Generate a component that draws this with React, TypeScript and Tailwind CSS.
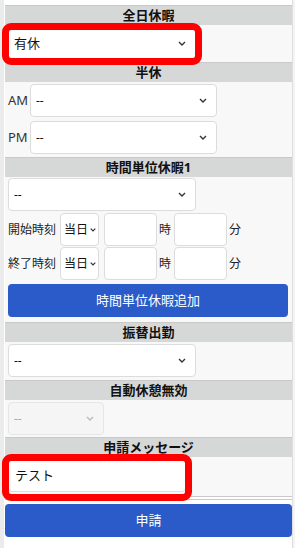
import React from "react";

const Chevron = ({ color = "#333" }: { color?: string }) => (
  <svg width="8" height="5" viewBox="0 0 8 5" className="shrink-0">
    <path d="M1 1l3 3 3-3" fill="none" stroke={color} strokeWidth="1.4" />
  </svg>
);

function Select({ value, cls, disabled }: { value: string; cls: string; disabled?: boolean }) {
  return (
    <div
      className={`h-[33px] flex items-center justify-between pl-[5px] pr-[9px] border rounded-[4px] ${
        disabled ? "bg-[#f5f5f5] border-[#e6e6e6] text-[#a8a8a8]" : "bg-white border-[#dcdcdc] text-[#111]"
      } ${cls}`}
    >
      <span>{value}</span>
      <Chevron color={disabled ? "#bbb" : "#333"} />
    </div>
  );
}

const Header = ({ children }: { children: React.ReactNode }) => (
  <div className="h-[20px] border-t border-[#c9c9c9] bg-[#d6d8d7] flex items-center justify-center font-bold text-[13px] text-[#111] leading-none">
    {children}
  </div>
);

const Red = ({ cls }: { cls: string }) => (
  <div className={`absolute border-[7px] border-[#ff0000] rounded-[9px] pointer-events-none ${cls}`} />
);

const TimeRow = ({ label }: { label: string }) => (
  <div className="flex items-center h-[33px]">
    <span className="w-[52px] text-[#222]">{label}</span>
    <div className="w-[39px] h-[33px] border border-[#dcdcdc] rounded-[4px] bg-white flex items-center pl-[3px] gap-[2px]">
      <span>当日</span>
      <svg width="6" height="4" viewBox="0 0 6 4"><path d="M0.7 0.7l2.3 2.3 2.3-2.3" fill="none" stroke="#333" strokeWidth="1.2" /></svg>
    </div>
    <div className="w-[53px] h-[33px] ml-[5px] border border-[#dcdcdc] rounded-[4px] bg-white" />
    <span className="ml-[2px] w-[15px] text-[#222]">時</span>
    <div className="w-[53px] h-[33px] border border-[#dcdcdc] rounded-[4px] bg-white" />
    <span className="ml-[2px] text-[#222]">分</span>
  </div>
);

export default function App() {
  return (
    <div
      className="w-[295px] h-[548px] bg-white flex overflow-hidden text-[12px] text-[#111]"
      style={{ fontFamily: '"Noto Sans", "Noto Sans CJK JP", sans-serif' }}
    >
      <div className="w-[4px] bg-[#ebebeb] shrink-0" />
      <div className="w-[1px] bg-white shrink-0" />
      <div className="w-[287px] shrink-0 flex flex-col pt-[5px]">
        <Header>全日休暇</Header>
        <div className="bg-[#f8f8f8] px-[3px] pt-[2px] pb-[2px] h-[37px]">
          <div className="relative w-[188px]">
            <Select value="有休" cls="w-[188px] text-[13px]" />
            <Red cls="-left-[6px] -right-[6px] -top-[4px] -bottom-[5px]" />
          </div>
        </div>
        <Header>半休</Header>
        <div className="bg-[#f8f8f8] px-[3px] pt-[2px] pb-[3px] flex flex-col gap-[4px]">
          <div className="flex items-center">
            <span className="w-[22px] text-[#333] text-[13px]">AM</span>
            <Select value="--" cls="w-[187px]" />
          </div>
          <div className="flex items-center">
            <span className="w-[22px] text-[#333] text-[13px]">PM</span>
            <Select value="--" cls="w-[187px]" />
          </div>
        </div>
        <Header>時間単位休暇1</Header>
        <div className="bg-[#f8f8f8] px-[3px] pt-[1px] pb-[5px] flex flex-col">
          <Select value="--" cls="w-[188px]" />
          <div className="mt-[2px]">
            <TimeRow label="開始時刻" />
          </div>
          <div className="mt-[1px]">
            <TimeRow label="終了時刻" />
          </div>
          <div className="mt-[4px] h-[33px] w-[280px] rounded-[4px] bg-[#2a5bc8] text-white text-[13px] flex items-center justify-center">
            時間単位休暇追加
          </div>
        </div>
        <Header>振替出勤</Header>
        <div className="bg-[#f8f8f8] px-[3px] pt-[2px] pb-[3px]">
          <Select value="--" cls="w-[188px]" />
        </div>
        <Header>自動休憩無効</Header>
        <div className="bg-[#f8f8f8] px-[3px] pt-[2px] pb-[2px]">
          <Select value="--" cls="w-[96px]" disabled />
        </div>
        <Header>申請メッセージ</Header>
        <div className="bg-[#f8f8f8] px-[3px] pt-[2px] pb-[4px] border-b border-[#c9c9c9]">
          <div className="relative w-[178px]">
            <div className="h-[33px] w-[178px] bg-white border border-[#dcdcdc] rounded-[4px] flex items-center pl-[6px] text-[13px]">
              テスト
            </div>
            <Red cls="-left-[6px] -right-[6px] -top-[5px] -bottom-[9px]" />
          </div>
        </div>
        <div className="mt-[2px] border-t border-[#c9c9c9]" />
        <div className="mt-[4px] h-[33px] rounded-[4px] bg-[#2a5bc8] text-white text-[13px] flex items-center justify-center">
          申請
        </div>
      </div>
      <div className="w-[1px] bg-[#dedede] shrink-0" />
      <div className="flex-1 bg-[#f4f4f4]" />
    </div>
  );
}
